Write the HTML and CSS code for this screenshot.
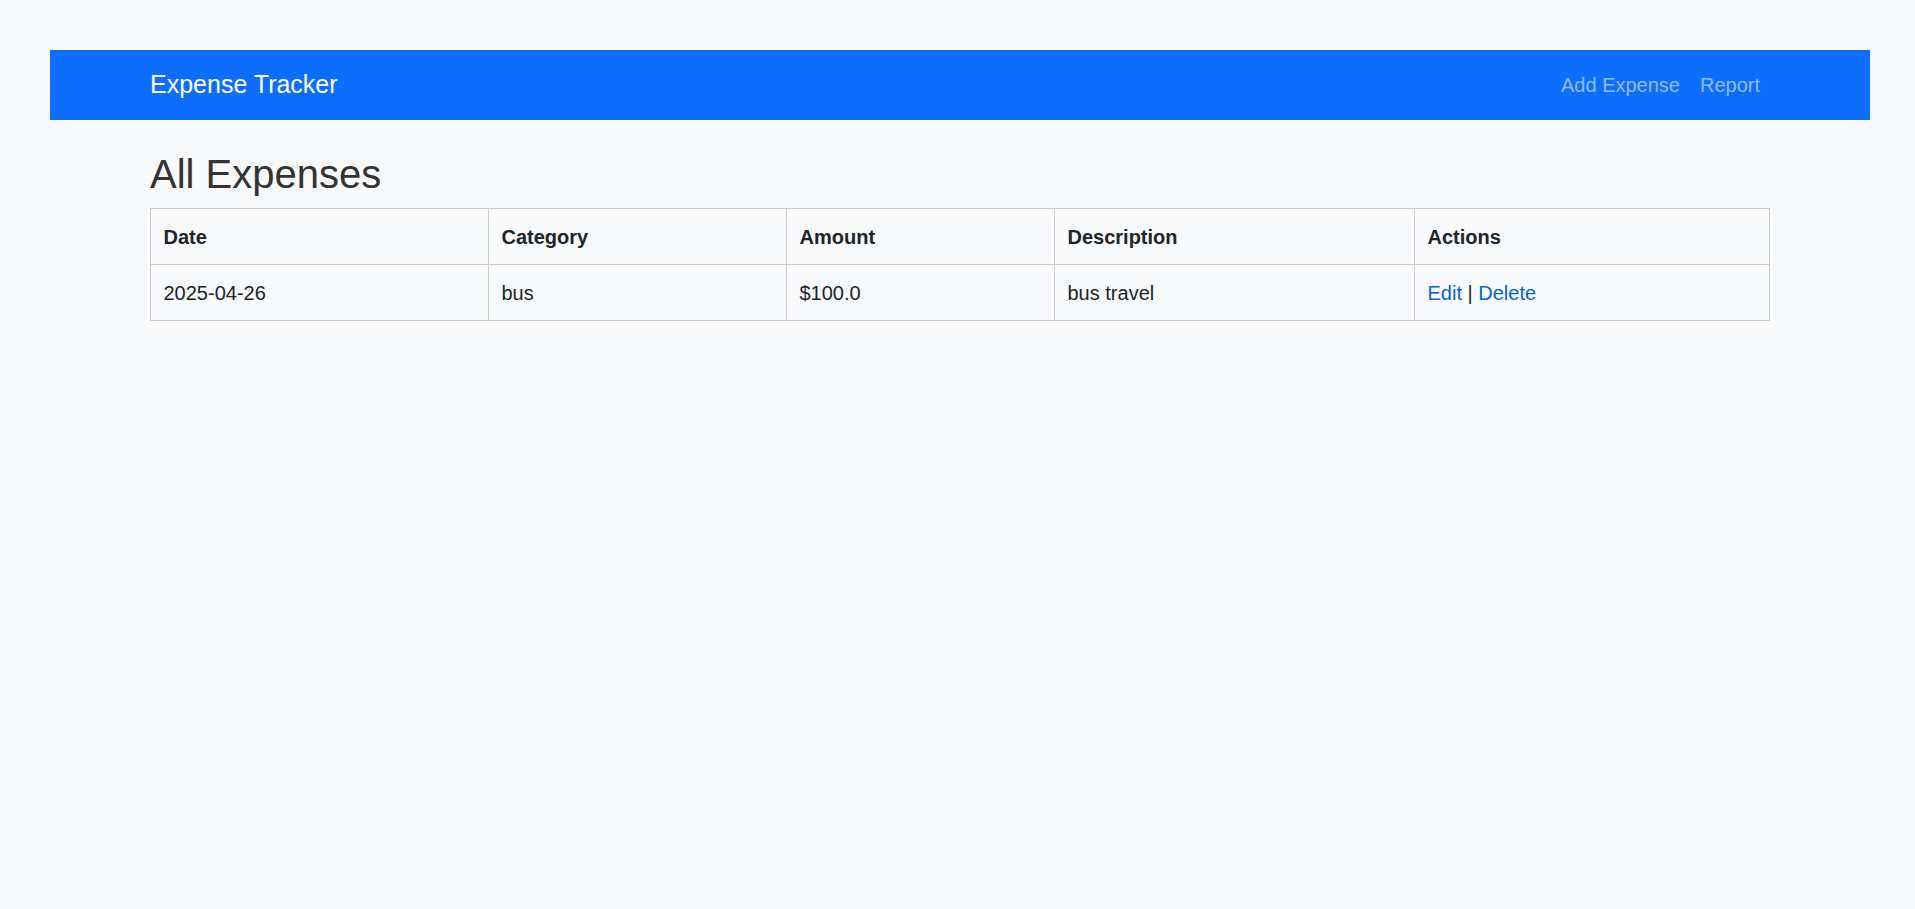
FILE: index.html
```html
<!DOCTYPE html>
<html lang="en">
<head>
<meta charset="utf-8">
<title>Expense Tracker</title>
<link rel="stylesheet" href="styles.css">
</head>
<body>
<nav class="navbar">
  <div class="nav-inner">
    <a class="brand" href="#">Expense Tracker</a>
    <div class="nav-links">
      <a class="nav-link" href="#">Add Expense</a>
      <a class="nav-link" href="#">Report</a>
    </div>
  </div>
</nav>
<main class="container">
  <h1 class="title">All Expenses</h1>
  <table class="table">
    <thead>
      <tr>
        <th class="c-date">Date</th>
        <th class="c-cat">Category</th>
        <th class="c-amt">Amount</th>
        <th class="c-desc">Description</th>
        <th class="c-act">Actions</th>
      </tr>
    </thead>
    <tbody>
      <tr>
        <td>2025-04-26</td>
        <td>bus</td>
        <td>$100.0</td>
        <td>bus travel</td>
        <td><a class="link" href="#">Edit</a> | <a class="link" href="#">Delete</a></td>
      </tr>
    </tbody>
  </table>
</main>
</body>
</html>
```

FILE: styles.css
```css
html, body {
  margin: 0;
  padding: 0;
}
body {
  background: #f8f9fa;
  font-family: "Liberation Sans", Arial, sans-serif;
  font-size: 20px;
  line-height: 1.5;
  color: #212529;
  padding: 50px 45px 0 50px;
}
.navbar {
  background: #0d6efd;
  height: 70px;
  display: flex;
  align-items: center;
}
.nav-inner {
  flex: 1;
  display: flex;
  align-items: center;
  justify-content: space-between;
  padding: 0 100px;
}
.brand {
  color: #fff;
  font-size: 25px;
  line-height: 37.5px;
  text-decoration: none;
}
.nav-links {
  display: flex;
}
.nav-link {
  color: rgba(255, 255, 255, 0.55);
  text-decoration: none;
  padding: 0 10px;
  font-size: 20px;
}
.container {
  width: 1620px;
  margin-left: 100px;
}
.title {
  font-size: 40px;
  font-weight: 400;
  line-height: 48px;
  color: #333;
  margin: 30px 0 10px;
}
.table {
  width: 1620px;
  border-collapse: collapse;
  table-layout: fixed;
}
.table th, .table td {
  border: 1px solid #cccccc;
  padding: 12.5px 12.5px;
  text-align: left;
  vertical-align: top;
  line-height: 30px;
}
.table th {
  font-weight: 700;
}
.c-date { width: 312px; }
.c-cat { width: 272px; }
.c-amt { width: 242px; }
.c-desc { width: 334px; }
.c-act { width: auto; }
.link {
  color: #0a63d3;
  text-decoration: none;
}
```
